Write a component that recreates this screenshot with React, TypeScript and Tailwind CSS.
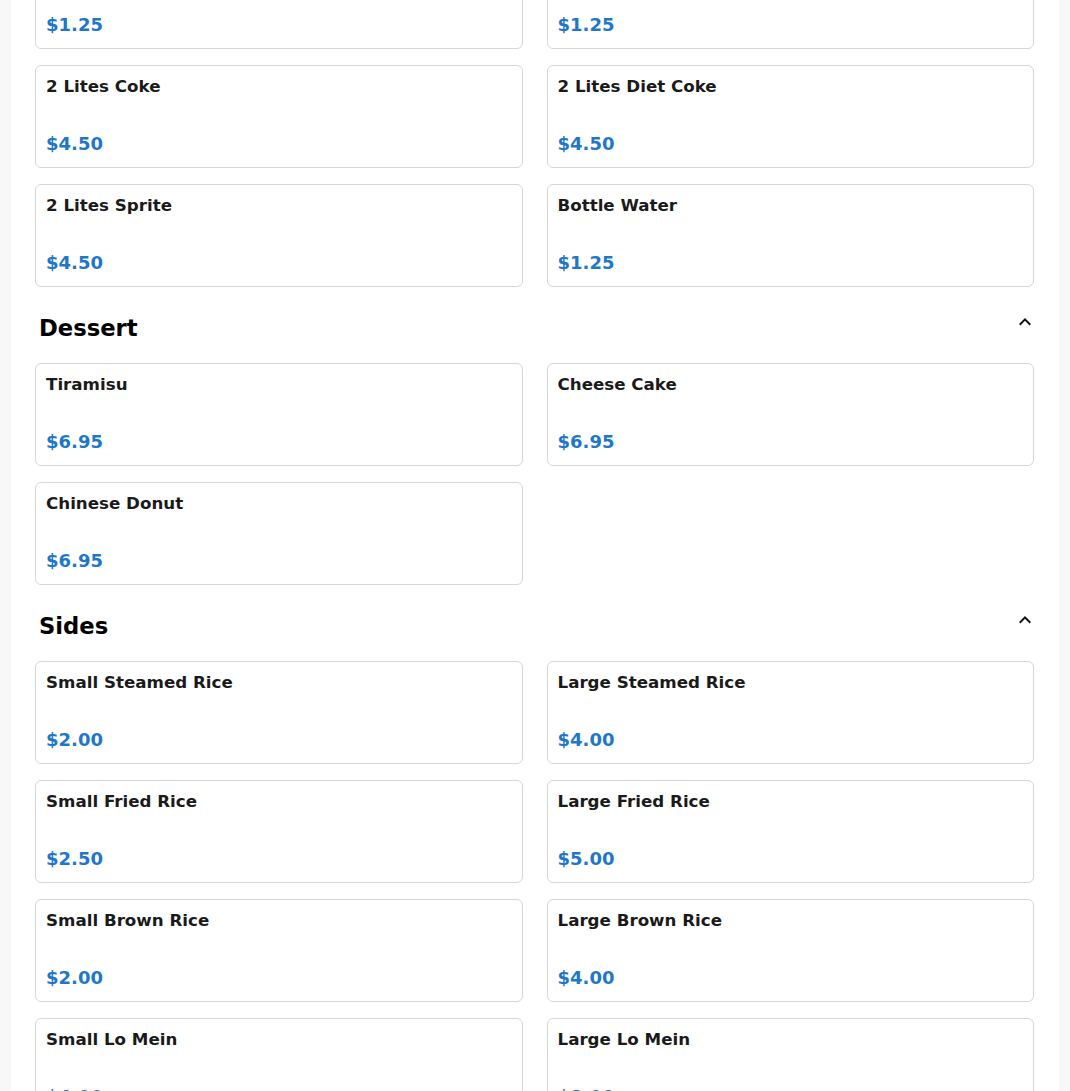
import React from "react";

type Item = { name: string; price: string };

const Card = ({ item }: { item: Item }) => (
  <div className="flex h-[103px] flex-col justify-between rounded-md border border-[#d6d6d6] bg-white pl-[10px] pr-[10px] pb-[11px] pt-[8px]">
    <div className="text-[16.7px] font-bold leading-[24px] text-[#1a1a1a]">{item.name}</div>
    <div className="text-[18px] font-bold leading-[24px] text-[#1f77c9]">{item.price}</div>
  </div>
);

const Grid = ({ items, className = "" }: { items: Item[]; className?: string }) => (
  <div className={`grid grid-cols-2 gap-x-[24px] gap-y-4 ${className}`}>
    {items.map((it, i) => (
      <Card key={i} item={it} />
    ))}
  </div>
);

const Chevron = () => (
  <svg width="24" height="24" viewBox="0 0 24 24" className="-mr-[3px] mt-[7px] shrink-0" fill="#111">
    <path d="M12 8l-6 6 1.41 1.41L12 10.83l4.59 4.58L18 14z" />
  </svg>
);

const Section = ({ title, items }: { title: string; items: Item[] }) => (
  <div className="mt-4">
    <div className="flex items-start justify-between pl-1">
      <h2 className="pt-[9px] text-[22.7px] font-bold leading-[32px] text-black">{title}</h2>
      <Chevron />
    </div>
    <Grid items={items} className="mt-[19px]" />
  </div>
);

export default function App() {
  const drinks: Item[] = [
    { name: "Can Coke", price: "$1.25" },
    { name: "Can Sprite", price: "$1.25" },
    { name: "2 Lites Coke", price: "$4.50" },
    { name: "2 Lites Diet Coke", price: "$4.50" },
    { name: "2 Lites Sprite", price: "$4.50" },
    { name: "Bottle Water", price: "$1.25" },
  ];
  const dessert: Item[] = [
    { name: "Tiramisu", price: "$6.95" },
    { name: "Cheese Cake", price: "$6.95" },
    { name: "Chinese Donut", price: "$6.95" },
  ];
  const sides: Item[] = [
    { name: "Small Steamed Rice", price: "$2.00" },
    { name: "Large Steamed Rice", price: "$4.00" },
    { name: "Small Fried Rice", price: "$2.50" },
    { name: "Large Fried Rice", price: "$5.00" },
    { name: "Small Brown Rice", price: "$2.00" },
    { name: "Large Brown Rice", price: "$4.00" },
    { name: "Small Lo Mein", price: "$4.00" },
    { name: "Large Lo Mein", price: "$8.00" },
  ];
  return (
    <div
      className="h-[1091px] overflow-hidden bg-[#f8f8f8]"
      style={{ fontFamily: '"DejaVu Sans", sans-serif' }}
    >
      <div className="mx-[11px] min-h-full bg-white pl-6 pr-[25px]">
        <Grid items={drinks} className="-mt-[54px]" />
        <Section title="Dessert" items={dessert} />
        <Section title="Sides" items={sides} />
      </div>
    </div>
  );
}
